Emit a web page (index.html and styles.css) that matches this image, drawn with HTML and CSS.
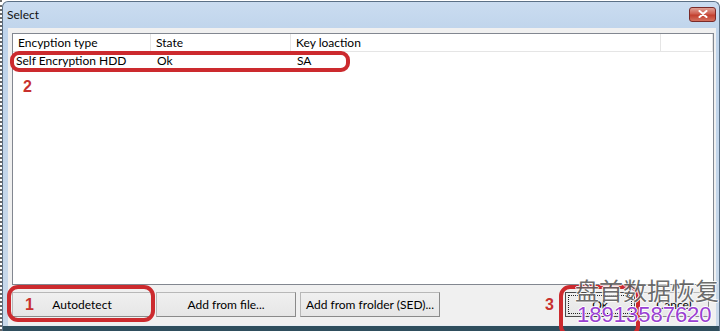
FILE: index.html
```html
<!DOCTYPE html>
<html lang="en">
<head>
  <meta charset="UTF-8">
  <title>Select</title>
  <link rel="stylesheet" href="styles.css">
</head>
<body>

  <!-- ダイアログ本体 -->
  <div class="window">
    <div class="titlebar">
      <span class="title">Select</span>
      <div class="close-btn">
        <svg viewBox="0 0 10 8" class="close-x">
          <path d="M1.5 1L8.5 7M8.5 1L1.5 7" stroke="#fff" stroke-width="2" stroke-linecap="round"/>
        </svg>
      </div>
    </div>

    <div class="client">
      <!-- リスト -->
      <div class="listview">
        <div class="lv-header">
          <div class="lv-hcell">Encyption type</div>
          <div class="lv-hcell">State</div>
          <div class="lv-hcell">Key loaction</div>
          <div class="lv-hcell"></div>
        </div>
        <div class="lv-row">
          <div class="lv-cell first">Self Encryption HDD</div>
          <div class="lv-cell">Ok</div>
          <div class="lv-cell">SA</div>
          <div class="lv-cell"></div>
        </div>
      </div>

      <!-- ボタン -->
      <div class="button-bar">
        <div class="btn-group">
          <button class="btn" type="button">Autodetect</button>
          <button class="btn" type="button">Add from file...</button>
          <button class="btn" type="button">Add from frolder (SED)...</button>
        </div>
        <div class="btn-group right">
          <button class="btn small default" type="button">Ok</button>
          <button class="btn small" type="button">Cancel</button>
        </div>
      </div>
    </div>
  </div>

  <!-- 注釈 -->
  <div class="ring ring-row"></div>
  <div class="ring ring-auto"></div>
  <div class="ring ring-ok"></div>
  <span class="mark mark-1">1</span>
  <span class="mark mark-2">2</span>
  <span class="mark mark-3">3</span>

  <!-- 透かし -->
  <div class="wm-name">盘首数据恢复</div>
  <div class="wm-phone">18913587620</div>

</body>
</html>
```

FILE: styles.css
```css
/* リセット */
*, *::before, *::after { margin:0; padding:0; box-sizing:border-box; }
html, body { width:724px; height:331px; overflow:hidden; }

body {
  background:#fff;
  font-family:Lato,'Noto Sans',sans-serif;
  font-size:12px; color:#000;
  position:relative;
  border-left:2px dotted #6a6a6a;
}

/* ウィンドウ枠 */
.window {
  margin-top:1px;
  width:718px; height:330px;
  border:1px solid #5b7086; border-bottom:none;
  border-radius:6px 6px 0 0;
  padding:0 3px 5px 5px;
  background:linear-gradient(to bottom,#cadcf0 0,#bfd4eb 30px,#c9d9ea calc(100% - 5px),#2f4e5d calc(100% - 5px));
  display:flex; flex-direction:column;
}

/* タイトルバー */
.titlebar {
  height:26px; flex:none;
  display:flex; align-items:center; justify-content:space-between;
}
.title { font-size:12px; color:#111; margin-left:-1px; margin-top:-1px; }
.close-btn {
  width:27px; height:15px; margin-top:-2px;
  border:1px solid #7a2a28; border-radius:3px;
  background:linear-gradient(to bottom,#e0a196 0,#cf5e4f 45%,#c2402f 55%,#d4705e 100%);
  display:flex; align-items:center; justify-content:center;
}
.close-x { width:10px; height:8px; }

/* クライアント領域 */
.client {
  flex:1;
  background:#f0f0f0;
  padding:5px 2px 0 4px;
  border-bottom:1px solid #e8eef4;
  display:flex; flex-direction:column;
}

/* リストビュー */
.listview {
  height:252px;
  background:#fff;
  border:1px solid #828790;
}
.lv-header, .lv-row {
  display:grid;
  grid-template-columns:138px 140px 370px 1fr;
}
.lv-header { height:18px; border-bottom:1px solid #e5e5e5; }
.lv-hcell {
  border-right:1px solid #e5e5e5;
  padding-left:5px; line-height:17px;
  white-space:nowrap;
}
.lv-row { height:18px; }
.lv-cell { padding-left:6px; line-height:18px; white-space:nowrap; }
.lv-cell.first { padding-left:3px; }

/* ボタン */
.button-bar {
  margin-top:7px;
  display:flex; justify-content:space-between;
}
.btn-group { display:flex; gap:4px; }
.btn-group.right { margin-right:5px; }
.btn {
  width:140px; height:25px;
  font:inherit; font-size:12px; color:#000;
  background:linear-gradient(to bottom,#f0f0f0,#e6e6e6);
  border:1px solid #b8b8b8;
  border-right-color:#8a8a8a; border-bottom-color:#8a8a8a;
}
.btn.small { width:70px; }
.btn.default {
  border:1px solid #4a4a4a;
  outline:1px dotted #222; outline-offset:-4px;
}

/* 赤い囲み（body左ボーダー2px分ずらす） */
.ring {
  position:absolute;
  border:4px solid #cc2a2e; border-radius:9px;
}
.ring-row  { left:8px;   top:51px;  width:340px; height:21px; }
.ring-auto { left:5px;   top:285px; width:148px; height:37px; border-radius:11px; }
.ring-ok   { left:557px; top:285px; width:81px;  height:52px; border-radius:11px; }

.mark {
  position:absolute;
  font-family:'Liberation Sans',sans-serif;
  font-weight:bold; font-size:16px; color:#c8302e;
  line-height:16px;
}
.mark-1 { left:23px;  top:297px; }
.mark-2 { left:21px;  top:79px; }
.mark-3 { left:543px; top:297px; }

/* 透かし */
.wm-name {
  position:absolute; left:573px; top:275px;
  font-family:'Noto Sans CJK SC',sans-serif;
  font-size:24px; line-height:30px; color:#5e5e5e;
  opacity:.9;
  text-shadow:-1px 0 #fff,1px 0 #fff,0 -1px #fff,0 1px #fff;
}
.wm-phone {
  position:absolute; left:575px; top:302px;
  font-family:'Liberation Sans',sans-serif;
  font-size:22px; line-height:26px; color:#9a40d2;
  text-shadow:-1px 0 #fff,1px 0 #fff,0 -1px #fff,0 1px #fff;
}
```
